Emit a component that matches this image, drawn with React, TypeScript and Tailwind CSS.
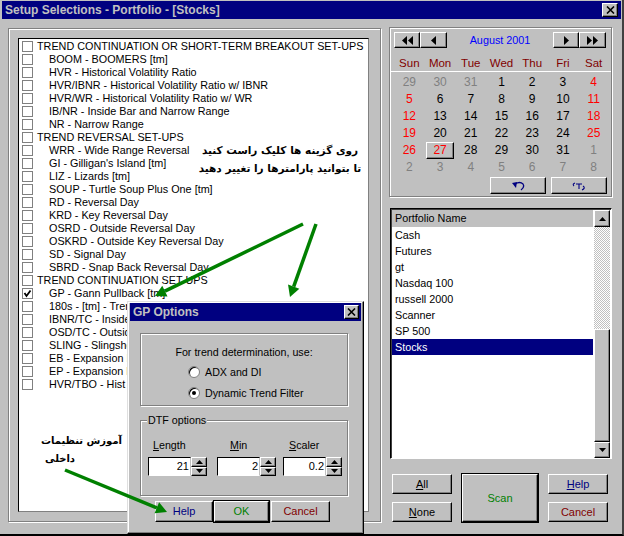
import type { ReactNode } from "react";

const raised = "border border-t-white border-l-white border-r-[#000] border-b-[#000] shadow-[inset_-1px_-1px_0_#808080]";
const etched = "border border-[#808080] shadow-[1px_1px_0_#fff,inset_1px_1px_0_#fff]";

const setups: [string, boolean, boolean?][] = [
  ["TREND CONTINUATION OR SHORT-TERM BREAKOUT SET-UPS", true],
  ["BOOM - BOOMERS [tm]", false],
  ["HVR - Historical Volatility Ratio", false],
  ["HVR/IBNR - Historical Volatility Ratio w/ IBNR", false],
  ["HVR/WR - Historical Volatility Ratio w/ WR", false],
  ["IB/NR - Inside Bar and Narrow Range", false],
  ["NR - Narrow Range", false],
  ["TREND REVERSAL SET-UPS", true],
  ["WRR - Wide Range Reversal", false],
  ["GI - Gilligan's Island [tm]", false],
  ["LIZ - Lizards [tm]", false],
  ["SOUP - Turtle Soup Plus One [tm]", false],
  ["RD - Reversal Day", false],
  ["KRD - Key Reversal Day", false],
  ["OSRD - Outside Reversal Day", false],
  ["OSKRD - Outside Key Reversal Day", false],
  ["SD - Signal Day", false],
  ["SBRD - Snap Back Reversal Day", false],
  ["TREND CONTINUATION SET-UPS", true],
  ["GP - Gann Pullback [tm]", false, true],
  ["180s -  [tm] - Trend", false],
  ["IBNR/TC - Inside", false],
  ["OSD/TC - Outside", false],
  ["SLING - Slingshot", false],
  ["EB - Expansion B", false],
  ["EP - Expansion P", false],
  ["HVR/TBO - Hist", false],
];

const days: [string, string][] = [
  ["29", "g"], ["30", "g"], ["31", "g"], ["1", "k"], ["2", "k"], ["3", "k"], ["4", "r"],
  ["5", "r"], ["6", "k"], ["7", "k"], ["8", "k"], ["9", "k"], ["10", "k"], ["11", "r"],
  ["12", "r"], ["13", "k"], ["14", "k"], ["15", "k"], ["16", "k"], ["17", "k"], ["18", "r"],
  ["19", "r"], ["20", "k"], ["21", "k"], ["22", "k"], ["23", "k"], ["24", "k"], ["25", "r"],
  ["26", "r"], ["27", "t"], ["28", "k"], ["29", "k"], ["30", "k"], ["31", "k"], ["1", "g"],
  ["2", "g"], ["3", "g"], ["4", "g"], ["5", "g"], ["6", "g"], ["7", "g"], ["8", "g"],
];

const portfolios = ["Cash", "Futures", "gt", "Nasdaq 100", "russell 2000", "Scanner", "SP 500", "Stocks"];

function Btn({ className, children }: { className: string; children: ReactNode }) {
  return <div className={`flex items-center justify-center bg-[#c0c0c0] ${raised} ${className}`}>{children}</div>;
}

function Tri({ dir, double, color = "#000" }: { dir: "l" | "r"; double?: boolean; color?: string }) {
  const pts = dir === "l" ? "5,0 5,9 0,4.5" : "0,0 0,9 5,4.5";
  return (
    <span className="flex gap-[1px]">
      <svg width="5" height="9"><polygon points={pts} fill={color} /></svg>
      {double && <svg width="5" height="9"><polygon points={pts} fill={color} /></svg>}
    </span>
  );
}

function Spinner({ value, className }: { value: string; className: string }) {
  return (
    <div className={`flex h-[19px] ${className}`}>
      <div className="flex-1 bg-white border border-t-[#000] border-l-[#000] border-r-[#c0c0c0] border-b-white text-right pr-[1px] text-[11px] leading-[17px]">{value}</div>
      <div className="w-[16px] flex flex-col">
        <Btn className="h-[9.5px]"><svg width="7" height="4"><polygon points="3.5,0 7,4 0,4" fill="#000" /></svg></Btn>
        <Btn className="h-[9.5px]"><svg width="7" height="4"><polygon points="0,0 7,0 3.5,4" fill="#000" /></svg></Btn>
      </div>
    </div>
  );
}

function Radio({ on }: { on?: boolean }) {
  return (
    <span className="w-[12px] h-[12px] rounded-full bg-white border border-[#808080] flex items-center justify-center shadow-[inset_1px_1px_0_#000]">
      {on && <span className="w-[4px] h-[4px] rounded-full bg-black" />}
    </span>
  );
}

function GpOptions() {
  return (
    <div className="absolute left-[127px] top-[301px] w-[237px] h-[233px] bg-[#c0c0c0] border border-t-[#dfdfdf] border-l-[#dfdfdf] border-r-[#000] border-b-[#000] pt-[1px] px-[2px] flex flex-col shadow-[inset_-1px_-1px_0_#808080,inset_1px_1px_0_#fff]">
      <div className="h-[18px] bg-[#000080] flex items-center justify-between pl-[3px] pr-[2px] shrink-0">
        <span className="text-[#c0c0c0] font-bold text-[12px]">GP Options</span>
        <Btn className="w-[15px] h-[14px]">
          <svg width="9" height="8"><path d="M1 0.5 L8 7.5 M8 0.5 L1 7.5" stroke="#000" strokeWidth="1.6" /></svg>
        </Btn>
      </div>
      <div className={`mt-[12px] ml-[10px] w-[208px] h-[73px] flex flex-col ${etched}`}>
        <div className="text-center mt-[10px] text-[10.7px] leading-[16px]">For trend determination, use:</div>
        <div className="ml-[47px] mt-[4px] flex items-center gap-[5px] text-[10.7px] leading-[16px]"><Radio />ADX and DI</div>
        <div className="ml-[47px] mt-[5px] flex items-center gap-[5px] text-[10.7px] leading-[16px]"><Radio on />Dynamic Trend Filter</div>
      </div>
      <div className={`relative mt-[14px] ml-[10px] w-[208px] h-[76px] ${etched}`}>
        <span className="absolute left-[6px] -top-[8px] bg-[#c0c0c0] px-[1px] text-[10.7px] leading-[14px]">DTF options</span>
        <div className="flex mt-[16px] pl-[7px] text-[10.7px] leading-[16px]">
          <span className="w-[69px] pl-[5px]"><u>L</u>ength</span>
          <span className="w-[66px] pl-[13px]"><u>M</u>in</span>
          <span className="pl-[6px]"><u>S</u>caler</span>
        </div>
        <div className="flex mt-[4px] pl-[7px]">
          <Spinner value="21" className="w-[59px]" />
          <Spinner value="2" className="ml-[10px] w-[59px]" />
          <Spinner value="0.2" className="ml-[7px] w-[59px]" />
        </div>
      </div>
      <div className="flex mt-[5px] ml-[25px]">
        <Btn className="w-[58px] h-[21px] text-[#000080] text-[11px]">Help</Btn>
        <Btn className="ml-[1px] w-[55px] h-[21px] text-[#008000] text-[11px] outline outline-1 outline-black">OK</Btn>
        <Btn className="ml-[2px] w-[59px] h-[21px] text-[#800000] text-[11px]">Cancel</Btn>
      </div>
    </div>
  );
}

function Arrow({ x1, y1, x2, y2 }: { x1: number; y1: number; x2: number; y2: number }) {
  const a = Math.atan2(y2 - y1, x2 - x1);
  const l = 11;
  const w = 6;
  const bx = x2 - l * Math.cos(a);
  const by = y2 - l * Math.sin(a);
  const px = -Math.sin(a) * w;
  const py = Math.cos(a) * w;
  return (
    <>
      <line x1={x1} y1={y1} x2={bx} y2={by} stroke="#008000" strokeWidth="3.5" />
      <polygon points={`${x2},${y2} ${bx + px},${by + py} ${bx - px},${by - py}`} fill="#008000" />
    </>
  );
}

export default function App() {
  return (
    <div className="relative w-[624px] h-[536px] overflow-hidden bg-[#c0c0c0] text-black border-r-2 border-b-2 border-r-[#404040] border-b-[#000] pl-[2px] pt-[1px] flex flex-col" style={{ fontFamily: '"Liberation Sans", Arial, sans-serif' }}>
      <div className="h-[18px] bg-[#000080] flex items-center justify-between pl-[3px] pr-[3px] shrink-0 mr-[1px]">
        <span className="text-[#c0c0c0] font-bold text-[12px]">Setup Selections - Portfolio - [Stocks]</span>
        <Btn className="w-[16px] h-[14px]">
          <svg width="9" height="8"><path d="M1 0.5 L8 7.5 M8 0.5 L1 7.5" stroke="#000" strokeWidth="1.6" /></svg>
        </Btn>
      </div>

      <div className="flex flex-1">
        {/* lista setup */}
        <div className={`ml-[6px] mt-[9px] w-[373px] h-[494px] p-[9px] pr-[11px] ${etched}`}>
          <div className="h-full bg-white border border-t-[#000] border-l-[#000] border-r-[#808080] border-b-[#808080] pt-[1px] pl-[3px]">
            {setups.map(([label, head, checked], i) => (
              <div key={i} className="h-[13px] flex items-center text-[10.8px] whitespace-nowrap">
                <span className="w-[11px] h-[11px] border border-[#808080] bg-white flex items-center justify-center shrink-0">
                  {checked && <svg width="9" height="9"><path d="M1.5 4 L3.5 7 L7.5 1.5" stroke="#000" strokeWidth="1.8" fill="none" /></svg>}
                </span>
                <span className={head ? "ml-[4px]" : "ml-[16px]"}>{label}</span>
              </div>
            ))}
          </div>
        </div>

        {/* colonna destra */}
        <div className="ml-[8px] mt-[8px] w-[223px] flex flex-col">
          <div className={`h-[170px] flex flex-col ${etched}`}>
            <div className="flex items-center h-[16px] mt-[4px] ml-[4px] mr-[5px]">
              <Btn className="w-[26px] h-[16px]"><Tri dir="l" double /></Btn>
              <Btn className="w-[27px] h-[16px]"><Tri dir="l" /></Btn>
              <span className="flex-1 text-center text-[10.8px] text-[#0000ff]">August 2001</span>
              <Btn className="w-[26px] h-[16px]"><Tri dir="r" /></Btn>
              <Btn className="w-[27px] h-[16px]"><Tri dir="r" double /></Btn>
            </div>
            <div className="grid grid-cols-7 mt-[8px] pl-[4px] pr-[2px] text-[11.5px] text-[#800000] text-center leading-[14px]">
              {["Sun", "Mon", "Tue", "Wed", "Thu", "Fri", "Sat"].map((d) => <span key={d}>{d}</span>)}
            </div>
            <div className="h-[1px] bg-white mt-[1px]" />
            <div className="grid grid-cols-7 mt-[2px] pl-[4px] pr-[2px] text-[12px] text-center leading-[17px]">
              {days.map(([d, k], i) =>
                k === "t" ? (
                  <span key={i} className={`h-[17px] mx-[1px] text-[#ff0000] leading-[14px] ${raised}`}>{d}</span>
                ) : (
                  <span key={i} className={k === "g" ? "text-[#808080]" : k === "r" ? "text-[#ff0000]" : "text-black"}>{d}</span>
                ),
              )}
            </div>
            <div className="flex justify-end gap-[5px] mt-[1px] mr-[4px]">
              <Btn className="w-[56px] h-[17px]">
                <svg width="14" height="10" viewBox="0 0 14 10"><path d="M4 3 Q9 0 12 3 Q14 6 10 9" stroke="#000080" strokeWidth="1.3" fill="none" /><polygon points="1,2 6,1 5,7" fill="#000080" /></svg>
              </Btn>
              <Btn className="w-[56px] h-[17px]">
                <svg width="14" height="10" viewBox="0 0 14 10"><path d="M3 2 Q0 3 2 5 M11 5 Q14 7 10 9 M4 3 L10 3 M7 3 L7 8" stroke="#000080" strokeWidth="1.1" fill="none" /></svg>
              </Btn>
            </div>
          </div>

          <div className="mt-[11px] ml-[1px] w-[222px] h-[251px] flex bg-white border border-t-[#000] border-l-[#000] border-r-white border-b-white shadow-[inset_1px_1px_0_#404040]">
            <div className="flex-1 flex flex-col pl-[1px] pt-[1px]">
              <div className="h-[17px] bg-[#c0c0c0] pl-[3px] text-[10.8px] leading-[17px]">Portfolio Name</div>
              {portfolios.map((p) => (
                <div key={p} className={`h-[16px] pl-[3px] text-[10.8px] leading-[16px] ${p === "Stocks" ? "bg-[#000080] text-white" : ""}`}>{p}</div>
              ))}
            </div>
            <div className="w-[18px] pl-[1px] flex flex-col mt-[1px]">
              <Btn className="w-[16px] h-[17px] shrink-0"><svg width="7" height="4"><polygon points="3.5,0 7,4 0,4" fill="#000" /></svg></Btn>
              <div className="w-[16px] h-[102px] bg-[repeating-conic-gradient(#c0c0c0_0_25%,#fff_0_50%)] bg-[length:2px_2px]" />
              <div className={`w-[16px] flex-1 bg-[#c0c0c0] ${raised}`} />
              <Btn className="w-[16px] h-[16px] shrink-0"><svg width="7" height="4"><polygon points="0,0 7,0 3.5,4" fill="#000" /></svg></Btn>
            </div>
          </div>

          <div className="flex mt-[15px] ml-[3px]">
            <div className="flex flex-col gap-[8px] w-[60px]">
              <Btn className="h-[20px] text-[11px]"><span><u>A</u>ll</span></Btn>
              <Btn className="h-[20px] text-[11px]"><span><u>N</u>one</span></Btn>
            </div>
            <Btn className="ml-[10px] w-[76px] h-[48px] text-[11px] text-[#008000] outline outline-1 outline-black">Scan</Btn>
            <div className="flex flex-col gap-[8px] w-[60px] ml-[10px]">
              <Btn className="h-[20px] text-[11px] text-[#000080]"><span><u>H</u>elp</span></Btn>
              <Btn className="h-[20px] text-[11px] text-[#800000]">Cancel</Btn>
            </div>
          </div>
        </div>
      </div>

      <GpOptions />

      {/* annotazioni persiane */}
      <div dir="rtl" className="absolute left-[190px] top-[141px] w-[180px] text-center font-bold text-[10.5px] leading-[18px] whitespace-nowrap" style={{ fontFamily: '"DejaVu Sans", sans-serif' }}>
        <div>روی گزینه ها کلیک راست کنید</div>
        <div>تا بتوانید پارامترها را تغییر دهید</div>
      </div>
      <div dir="rtl" className="absolute left-[40px] top-[432px] w-[82px] text-right font-bold text-[10px] leading-[18px] whitespace-nowrap" style={{ fontFamily: '"DejaVu Sans", sans-serif' }}>
        <div>آموزش تنظیمات</div>
        <div className="pr-[47px]">داخلی</div>
      </div>

      <svg className="absolute left-0 top-0 pointer-events-none" width="624" height="536">
        <Arrow x1={303} y1={224} x2={155} y2={296} />
        <Arrow x1={316} y1={224} x2={290} y2={297} />
        <Arrow x1={65} y1={470} x2={167} y2={512} />
      </svg>
    </div>
  );
}
